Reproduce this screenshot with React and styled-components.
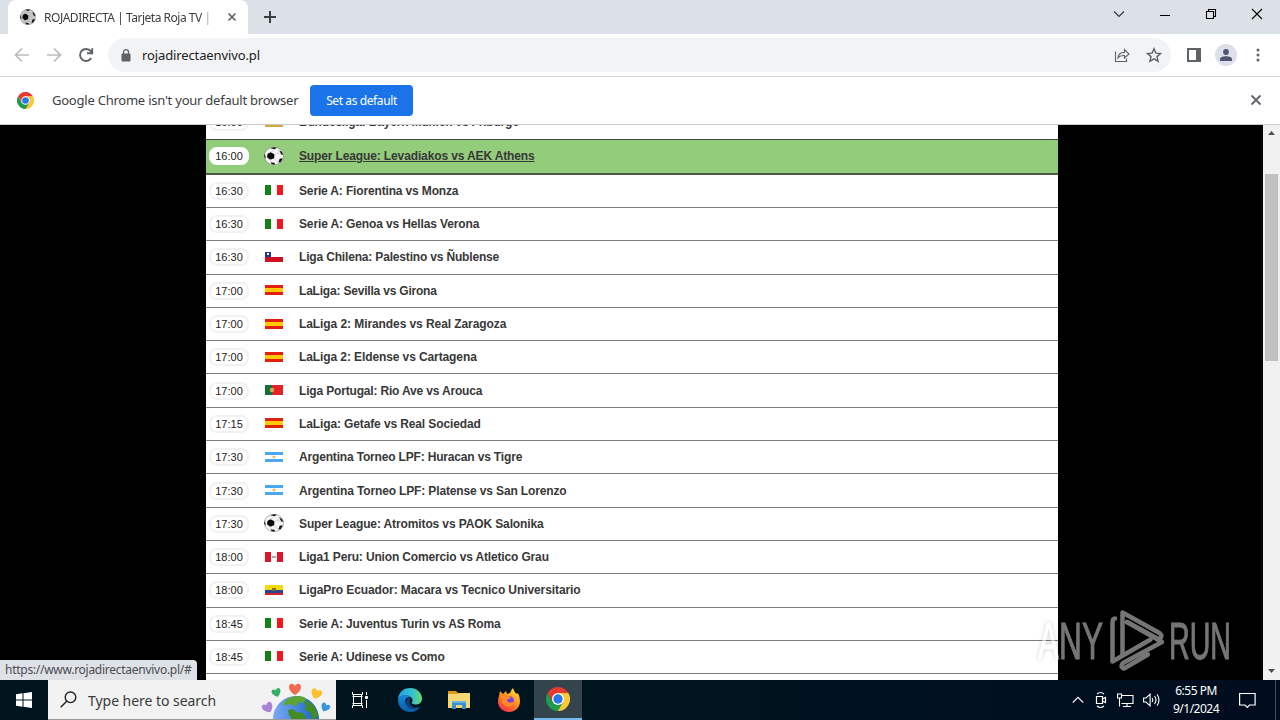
import React from 'react'
import styled, { createGlobalStyle, css } from 'styled-components'

const GlobalStyle = createGlobalStyle`
  * { box-sizing: border-box; }
  body { margin: 0; background: #000; overflow: hidden; }
  svg { display: block; flex: none; }
`

const uiFont = '"Noto Sans", "Open Sans", sans-serif'

// track = letter spacing of the title in px
const matches = [
  { time: '16:00', flag: 'de', track: -0.19, title: 'Bundesliga: Bayern Munich vs Friburgo' },
  { time: '16:00', flag: 'ball', track: -0.13, title: 'Super League: Levadiakos vs AEK Athens', active: true },
  { time: '16:30', flag: 'it', track: -0.15, title: 'Serie A: Fiorentina vs Monza' },
  { time: '16:30', flag: 'it', track: -0.13, title: 'Serie A: Genoa vs Hellas Verona' },
  { time: '16:30', flag: 'cl', track: -0.17, title: 'Liga Chilena: Palestino vs Ñublense' },
  { time: '17:00', flag: 'es', track: -0.2, title: 'LaLiga: Sevilla vs Girona' },
  { time: '17:00', flag: 'es', track: -0.08, title: 'LaLiga 2: Mirandes vs Real Zaragoza' },
  { time: '17:00', flag: 'es', track: -0.1, title: 'LaLiga 2: Eldense vs Cartagena' },
  { time: '17:00', flag: 'pt', track: -0.17, title: 'Liga Portugal: Rio Ave vs Arouca' },
  { time: '17:15', flag: 'es', track: -0.12, title: 'LaLiga: Getafe vs Real Sociedad' },
  { time: '17:30', flag: 'ar', track: -0.17, title: 'Argentina Torneo LPF: Huracan vs Tigre' },
  { time: '17:30', flag: 'ar', track: -0.14, title: 'Argentina Torneo LPF: Platense vs San Lorenzo' },
  { time: '17:30', flag: 'ball', track: -0.12, title: 'Super League: Atromitos vs PAOK Salonika' },
  { time: '18:00', flag: 'pe', track: -0.15, title: 'Liga1 Peru: Union Comercio vs Atletico Grau' },
  { time: '18:00', flag: 'ec', track: -0.09, title: 'LigaPro Ecuador: Macara vs Tecnico Universitario' },
  { time: '18:45', flag: 'it', track: -0.14, title: 'Serie A: Juventus Turin vs AS Roma' },
  { time: '18:45', flag: 'it', track: -0.14, title: 'Serie A: Udinese vs Como' },
]

const Ball = ({ w = 20, h = 18, skin = '#f4f4f4' }) => (
  <svg width={w} height={h} viewBox="0 0 20 18" preserveAspectRatio="none">
    <ellipse cx="10" cy="9" rx="9.6" ry="8.8" fill={skin} stroke="#777" strokeWidth=".5" />
    <path d="M3.6 6.8 6.6 5.2 10.4 7.2 10.2 11.2 6.2 12.8 3 10.2Z" fill="#080808" />
    <path d="M6.5 1.2 10 .2 12.8.8 10.5 2.2Z M15.2 3.2 18 5 19.2 8 17.3 7.6Z M15.8 11.5 18.8 11.6 16.6 15.2 14.3 15.6Z M6.8 15.2 11 16 10.3 17.8 7.5 17Z M.5 6.5 1.6 9.6 1.3 12.2.3 9.5Z" fill="#111" />
    <path d="M7 5.3 10.5 2.2M10.4 7.6 14 6.5 17.3 7.6M9.8 11.2 14.3 15.6M6 12.2 6.8 15.2M14 6.5 15.2 3.2" stroke="#bbb" strokeWidth=".5" fill="none" />
  </svg>
)

const Flag = ({ code }) => {
  if (code === 'ball') return <Ball />
  return (
    <svg width="18" height="10" viewBox="0 0 18 10" shapeRendering="crispEdges">
      {code === 'de' && <><path d="M0 0h18v4H0z" fill="#111" /><path d="M0 4h18v3H0z" fill="#d00" /><path d="M0 7h18v3H0z" fill="#cfa93a" /></>}
      {code === 'it' && <><path d="M0 0h6v10H0z" fill="#128216" /><path d="M6 0h6v10H6z" fill="#fff" /><path d="M12 0h6v10h-6z" fill="#f6161c" /></>}
      {code === 'cl' && <><path d="M0 0h18v5H0z" fill="#fff" /><path d="M0 5h18v5H0z" fill="#cf1020" /><path d="M0 0h6v5H0z" fill="#1c3795" /><path d="M2 1h2v2H2z" fill="#fff" /></>}
      {code === 'es' && <><path d="M0 0h18v10H0z" fill="#e3200d" /><path d="M0 3h18v4H0z" fill="#ffc905" /></>}
      {code === 'pt' && <><path d="M0 0h18v10H0z" fill="#e42328" /><path d="M0 0h7v10H0z" fill="#14703a" /><circle cx="7" cy="5" r="2.2" fill="#d9b33c" shapeRendering="auto" /><path d="M6 4h2v2H6z" fill="#e0907a" /></>}
      {code === 'ar' && <><path d="M0 0h18v10H0z" fill="#4aa8ee" /><path d="M0 3h18v4H0z" fill="#fff" /><circle cx="9" cy="5" r="1.6" fill="#eeba6a" shapeRendering="auto" /></>}
      {code === 'pe' && <><path d="M0 0h18v10H0z" fill="#e0122c" /><path d="M6 0h6v10H6z" fill="#fff" /><path d="M7 4h4v2H7z" fill="#a8b294" /></>}
      {code === 'ec' && <><path d="M0 0h18v5H0z" fill="#f4d90c" /><path d="M0 5h18v3H0z" fill="#28448e" /><path d="M0 8h18v2H0z" fill="#d3202b" /><path d="M7 3h4v3H7z" fill="#7f6a3b" /></>}
    </svg>
  )
}

const ChromeLogo = ({ size }) => (
  <svg width={size} height={size} viewBox="0 0 48 48">
    <path d="M24 24V12H44.8A24 24 0 0 1 24 48Z" fill="#fcc934" />
    <path d="M24 24 34.4 30 24 48A24 24 0 0 1 3.2 12L13.6 30Z" fill="#229a4c" />
    <path d="M24 12H44.8A24 24 0 0 0 3.2 12L13.6 30Z" fill="#e33b2e" />
    <circle cx="24" cy="24" r="12" fill="#fff" />
    <circle cx="24" cy="24" r="9.4" fill="#2878eb" />
  </svg>
)

const Stroke = ({ size = 16, d, w = 1.5, color = '#5f6368', fill = 'none' }) => (
  <svg width={size} height={size} viewBox="0 0 16 16">
    <path d={d} fill={fill} stroke={color} strokeWidth={w} />
  </svg>
)

export default function App() {
  return (
    <Screen>
      <GlobalStyle />
      <TabStrip>
        <Tab>
          <Ball w={16} h={16} skin="#c4c4c4" />
          <TabTitle>ROJADIRECTA | Tarjeta Roja TV | P</TabTitle>
          <Stroke size={16} d="M4.5 4.5l7 7M11.5 4.5l-7 7" w={1.7} />
        </Tab>
        <NewTab><Stroke d="M8 2v12M2 8h12" w={2} color="#3c4043" /></NewTab>
        <WindowButtons>
          <Stroke d="M3 5.5l5 5 5-5" w={1.1} color="#333" />
          <Stroke d="M3 9.5h10" w={1} color="#000" />
          <Stroke d="M3.5 5.5h7v7h-7zM5.5 5.5v-2h7v7h-2" w={1.1} color="#000" />
          <Stroke d="M3 3l10 10M13 3L3 13" w={1.1} color="#000" />
        </WindowButtons>
      </TabStrip>

      <Toolbar>
        <NavButtons>
          <Stroke d="M15 8H2M8 1.5L1.5 8 8 14.5" w={1.7} color="#b9bbbe" />
          <Stroke d="M1 8h13M8 1.5L14.5 8 8 14.5" w={1.7} color="#b9bbbe" />
          <Stroke d="M13.2 11A6 6 0 1 1 12.7 4.2L14 5.6M14.2 1.2V6.3H9" w={1.9} />
        </NavButtons>
        <Omnibox>
          <svg width="10" height="13" viewBox="0 0 10 13">
            <path d="M1 5h8v7H1z" fill="#5f6368" stroke="#5f6368" />
            <path d="M2.5 5V3.2a2.5 2.5 0 0 1 5 0V5" fill="none" stroke="#5f6368" strokeWidth="1.3" />
          </svg>
          <Address>rojadirectaenvivo.pl</Address>
          <Stroke d="M1.5 4.5v10h11v-3M4 11c.3-4 3-5.6 6.5-5.6V2.5L15 7l-4.500 4V8.5C7.5 8.3 5.5 9 4 11z" w={1.1} />
          <Stroke d="M8 1.8l1.85 4.3 4.7.4-3.56 3.1 1.06 4.6L8 11.8l-4.05 2.4L5 9.6 1.45 6.5l4.7-.4z" w={1.4} />
        </Omnibox>
        <ToolbarEnd>
          <svg width="14" height="14" viewBox="0 0 14 14">
            <path d="M1 1h12v12H1z" fill="#fff" stroke="#5f6368" strokeWidth="2" />
            <path d="M9 1h4v12H9z" fill="#5f6368" />
          </svg>
          <Avatar>
            <svg width="12" height="12" viewBox="0 0 12 12" fill="#4d5572">
              <circle cx="6" cy="3" r="2.9" /><path d="M0 12V10.2C0 8 3.5 7.2 6 7.2s6 .8 6 3V12z" />
            </svg>
          </Avatar>
          <svg width="4" height="14" viewBox="0 0 4 14" fill="#5f6368">
            <circle cx="2" cy="2" r="1.5" /><circle cx="2" cy="7" r="1.5" /><circle cx="2" cy="12" r="1.5" />
          </svg>
        </ToolbarEnd>
      </Toolbar>

      <InfoBar>
        <ChromeLogo size={17} />
        <InfoText>Google Chrome isn't your default browser</InfoText>
        <DefaultButton>Set as default</DefaultButton>
        <CloseInfo><Stroke d="M3.5 3.5l9 9M12.5 3.5l-9 9" w={1.8} /></CloseInfo>
      </InfoBar>

      <Viewport>
        <Agenda>
          {matches.map((m, i) => (
            <Match key={i} $active={m.active}>
              <Time $active={m.active}>{m.time}</Time>
              <FlagCell><Flag code={m.flag} /></FlagCell>
              <MatchTitle $active={m.active} $track={m.track}>{m.title}</MatchTitle>
            </Match>
          ))}
        </Agenda>
        <Scrollbar>
          <Arrow />
          <Thumb />
          <Arrow $down />
        </Scrollbar>
        <StatusBubble>https://www.rojadirectaenvivo.pl/#</StatusBubble>
        <Watermark>
          <svg width="200" height="70" viewBox="0 0 200 70">
            <g fill="#fff" stroke="#fff" strokeWidth="1" fontFamily="Liberation Sans, sans-serif" fontSize="51">
              <text x="3" y="53" textLength="65" lengthAdjust="spacingAndGlyphs">ANY</text>
              <text x="134" y="53" textLength="62" lengthAdjust="spacingAndGlyphs">RUN</text>
            </g>
            <g fill="none" stroke="#fff" strokeWidth="4.5" strokeLinejoin="round" strokeLinecap="round">
              <path d="M87.500 48V6.500l37 20.500q4 3-.5 6.500L92 16" />
              <path d="M80 12.500q-2.500 0-2.500 4.500v38.500l38-22" />
              <path d="M92 16l35 20L88 57q-3.500 4 1 5.500l24-14" />
            </g>
          </svg>
        </Watermark>
      </Viewport>

      <Taskbar>
        <StartButton>
          <svg width="16" height="16" viewBox="0 0 16 16" fill="#fff">
            <path d="M0 2.2L6.5 1.3V7.5H0zM7.5 1.2L16 0V7.5H7.5zM0 8.5H6.5V14.7L0 13.8zM7.5 8.5H16V16L7.5 14.8z" />
          </svg>
        </StartButton>
        <SearchBox>
          <svg width="17" height="17" viewBox="0 0 17 17" fill="none" stroke="#222" strokeWidth="1.4">
            <circle cx="10.5" cy="6.3" r="5.3" /><path d="M6.7 10.2L.7 16.2" />
          </svg>
          <span>Type here to search</span>
          <Globe />
        </SearchBox>
        <TaskIcon>
          <svg width="18" height="18" viewBox="0 0 18 18" fill="none" stroke="#fff" strokeWidth="1">
            <path d="M1.500 1v2.500h10V1M1.500 17v-2.500h10V17M2.500 3.500v11M10.500 3.500v11M1.500 5.500h10M1.500 12.500h10M15.500 1v3M15.500 9v8" /><path d="M14.500 5.500h2v2h-2z" fill="#fff" />
          </svg>
        </TaskIcon>
        <TaskIcon><Edge /></TaskIcon>
        <TaskIcon>
          <svg width="22" height="20" viewBox="0 0 22 20">
            <path d="M0 1h8l2 2h12v4H0z" fill="#e29a1d" /><path d="M0 4h9l2-1h11v15H0z" fill="#f9d774" />
            <path d="M4 11h14v8h-4v-4H8v4H4z" fill="#3b91cf" /><path d="M4 11h14v2H4z" fill="#62b5e5" />
          </svg>
        </TaskIcon>
        <TaskIcon><Firefox /></TaskIcon>
        <TaskIcon $active><ChromeLogo size={24} /></TaskIcon>
        <Tray>
          <Stroke size={14} d="M2 11l6-6 6 6" w={1.4} color="#fff" />
          <svg width="14" height="18" viewBox="0 0 14 18" fill="none" stroke="#fff" strokeWidth="1.2">
            <path d="M2.500 5.500h6v7h-6zM8.500 8l3-1.500v5l-3-1.500M3 3Q6.500 0 10 3M3 15Q6.500 18 10 15" />
          </svg>
          <svg width="17" height="15" viewBox="0 0 17 15" fill="none" stroke="#fff" strokeWidth="1.1">
            <path d="M5 2.500h11v8H4.500M10 10.500v3M6 13.500h8M.5 1h4v4h-4zM2.500 5v8.500" />
          </svg>
          <svg width="17" height="14" viewBox="0 0 17 14" fill="none" stroke="#fff" strokeWidth="1.1">
            <path d="M.6 5h2.500l4-3.800v11.600L3 9H.6zM9 5q1.500 2 0 4M11.500 3q3 4 0 8M14 1.200q4 5.800 0 11.600" />
          </svg>
        </Tray>
        <Clock><span>6:55 PM</span><span>9/1/2024</span></Clock>
        <svg width="17" height="17" viewBox="0 0 17 17" fill="none" stroke="#fff" strokeWidth="1.2">
          <path d="M.6 1.500h15.500v11.500H10.500L8.300 15.300 6 13H.6z" />
        </svg>
        <ShowDesktop />
      </Taskbar>
    </Screen>
  )
}

const heart = 'M0 8C-3 6-6 3.500-6 0-6-4-1.500-4 0-1 1.500-4 6-4 6 0 6 3.500 3 6 0 8Z'

const GlobeWrap = styled.div`
  margin-left: auto;
  align-self: flex-end;
`

const Globe = () => (
  <GlobeWrap>
    <svg width="72" height="39" viewBox="0 0 72 39">
      <defs>
        <linearGradient id="sea" x1="0" x2="1"><stop offset="0" stopColor="#7ba9f5" /><stop offset="1" stopColor="#1764c4" /></linearGradient>
      </defs>
      <circle cx="37" cy="39" r="23" fill="url(#sea)" />
      <path d="M25 22q6-6 14-6 6 0 8 3l-3 4-4-1-3 4-7-2-5 2z" fill="#5da531" />
      <path d="M47 20q9 4 12 15l-2 4h-3l-3-7-5-2 1-5-2-2zM29 30l5-1 3 3 7 1 4 6H33l-3-4z" fill="#438c24" />
      <path d={heart} transform="translate(36 7)" fill="#f36b53" />
      <path d={heart} transform="translate(17 11) rotate(-18) scale(.75)" fill="#35ae6a" />
      <path d={heart} transform="translate(58 12) rotate(20) scale(.9)" fill="#fbc02d" />
      <path d={heart} transform="translate(8 26) rotate(-28) scale(.9)" fill="#a982d6" />
      <path d={heart} transform="translate(67 26) rotate(28) scale(.75)" fill="#3796e0" />
    </svg>
  </GlobeWrap>
)

const Edge = () => (
  <svg width="24" height="24" viewBox="0 0 24 24">
    <defs>
      <linearGradient id="edgeTop" x1="0" x2="1"><stop offset="0" stopColor="#1ea5e3" /><stop offset=".6" stopColor="#35c1cf" /><stop offset="1" stopColor="#66dc6b" /></linearGradient>
      <linearGradient id="edgeLow" x1="0" x2="0" y2="1"><stop offset="0" stopColor="#1687d9" /><stop offset="1" stopColor="#0b5cab" /></linearGradient>
    </defs>
    <path d="M0 11C1 3 7 0 12 0c7 0 12 5 12 10.500 0 4-3 6-6.500 6-3 0-4-1.300-3.500-2.300.8-1.200.8-2.600 0-3.700C11 6 3 6 0 11z" fill="url(#edgeTop)" />
    <path d="M0 11C2 6 10 6 13 9c-4-.7-6 2-5.600 5 .6 5 7 8.500 14.600 5C19 23 15.500 24 12 24 5 24 0 19 0 11z" fill="url(#edgeLow)" />
    <path d="M11 9.500c-5 3-3 11 3.500 11.500 3 .2 6-1 7.500-2-5 1.800-10-.5-10.500-5-.2-1.700.4-2.800 1.300-4z" fill="#103f79" />
  </svg>
)

const Firefox = () => (
  <svg width="24" height="24" viewBox="0 0 24 24">
    <defs>
      <linearGradient id="fox" x1=".8" y1="0" x2=".2" y2="1"><stop offset="0" stopColor="#ffe43b" /><stop offset=".5" stopColor="#ff8a1f" /><stop offset="1" stopColor="#f5264f" /></linearGradient>
    </defs>
    <path d="M2 8l1-5 3 3 3-3 1 3 3-1q1-3 3-5 1 4 4 6l1-1q2 4 2 8c0 7-5 11-11 11S1 20 1 13q0-3 1-5z" fill="url(#fox)" />
    <circle cx="12" cy="13" r="5" fill="#7542e5" />
    <path d="M5 7q3-2 6 1l3 1q-1 2-4 2.500 0 3 3 3 3 .5 5-2-1 6-7 6-6-1-6-6z" fill="#ff8b25" />
  </svg>
)

const Screen = styled.div`
  width: 1280px;
  height: 720px;
  display: flex;
  flex-direction: column;
  overflow: hidden;
  font-family: ${uiFont};
`

const TabStrip = styled.header`
  height: 34px;
  flex: none;
  display: flex;
  align-items: center;
  background: #dce0e7;
  padding-left: 8px;
`

const Tab = styled.div`
  width: 240px;
  height: 34px;
  display: flex;
  align-items: center;
  gap: 8px;
  padding: 0 8px 0 12px;
  background: #fff;
  border-radius: 8px 8px 0 0;
`

const TabTitle = styled.span`
  width: 170px;
  margin-right: 2px;
  font-size: 12px;
  letter-spacing: -0.48px;
  color: #3c4043;
  white-space: nowrap;
  mask-image: linear-gradient(90deg, #000 92%, transparent);
`

const NewTab = styled.div`
  margin-left: 14px;
`

const WindowButtons = styled.div`
  margin-left: auto;
  margin-bottom: 6px;
  display: flex;
  gap: 30px;
  padding-right: 15px;
`

const Toolbar = styled.div`
  height: 43px;
  flex: none;
  display: flex;
  align-items: center;
  background: #fff;
  border-bottom: 1px solid #d5d7da;
`

const NavButtons = styled.div`
  width: 108px;
  padding-left: 14px;
  display: flex;
  gap: 16px;
`

const Omnibox = styled.div`
  width: 1063px;
  height: 34px;
  display: flex;
  align-items: center;
  gap: 16px;
  padding: 0 9px 0 13px;
  border-radius: 17px;
  background: #f1f3f4;
`

const Address = styled.span`
  flex: 1;
  margin-left: -5px;
  font-size: 13px;
  letter-spacing: -0.12px;
  color: #202124;
`

const ToolbarEnd = styled.div`
  display: flex;
  align-items: center;
  padding-left: 16px;
  gap: 14px;
`

const Avatar = styled.div`
  width: 22px;
  height: 22px;
  margin-right: 5px;
  display: flex;
  align-items: center;
  justify-content: center;
  border-radius: 50%;
  background: #dde0eb;
`

const InfoBar = styled.div`
  height: 48px;
  flex: none;
  display: flex;
  align-items: center;
  padding: 0 16px 1px 17px;
  background: #fff;
  border-bottom: 1px solid #c9cbce;
`

const InfoText = styled.span`
  margin-left: 18px;
  width: 246px;
  font-size: 13px;
  letter-spacing: -0.23px;
  color: #3c4043;
  white-space: nowrap;
`

const DefaultButton = styled.button`
  width: 103px;
  height: 31px;
  margin: 1px 0 0 12px;
  padding: 0;
  border: 0;
  border-radius: 4px;
  background: #1a73e8;
  color: #fff;
  font: 12px ${uiFont};
  letter-spacing: -0.4px;
`

const CloseInfo = styled.div`
  margin-left: auto;
`

const Viewport = styled.main`
  position: relative;
  flex: 1;
  min-height: 0;
  display: flex;
  justify-content: space-between;
  padding-left: 206px;
  background: #000;
  overflow: hidden;
`

const Agenda = styled.div`
  width: 852px;
  margin-top: -19.3px;
  background: #fff;
`

const Match = styled.div`
  height: 33.3px;
  display: flex;
  align-items: center;
  padding-left: 3px;
  background: #fff;
  border-bottom: 1px solid #7b7c7f;
  &:first-child {
    padding-top: 1px;
    border-bottom-color: #fff;
  }
  ${p => p.$active && css`
    height: 35.7px;
    background: #93cc7b;
    border-top: 1px solid #3f4a3f;
    border-bottom: 2px solid #4c584c;
  `}
`

const Time = styled.div`
  width: 40px;
  height: 18px;
  line-height: 15px;
  text-align: center;
  border: 2px solid ${p => (p.$active ? '#fff' : '#f2f2f3')};
  border-radius: 8px;
  background: #fff;
  color: #222;
  font-family: "Liberation Sans", Arial, sans-serif;
  font-size: 11px;
`

const FlagCell = styled.div`
  width: 50px;
  padding-bottom: 1px;
  display: flex;
  justify-content: center;
`

const MatchTitle = styled.a`
  color: #383838;
  font-family: "Liberation Sans", Arial, sans-serif;
  font-size: 12px;
  font-weight: bold;
  letter-spacing: ${p => p.$track}px;
  white-space: nowrap;
  text-decoration: ${p => (p.$active ? 'underline' : 'none')};
`

const Scrollbar = styled.div`
  width: 17px;
  display: flex;
  flex-direction: column;
  align-items: center;
  background: #f1f1f1;
`

const Arrow = styled.div`
  width: 7px;
  height: 4px;
  margin: ${p => (p.$down ? 'auto 0 7px' : '6px 0 39px')};
  background: #505050;
  clip-path: ${p => (p.$down ? 'polygon(0 0, 100% 0, 50% 100%)' : 'polygon(50% 0, 100% 100%, 0 100%)')};
`

const Thumb = styled.div`
  width: 13px;
  height: 187px;
  background: #c1c1c1;
`

const StatusBubble = styled.div`
  position: absolute;
  left: 0;
  bottom: 0;
  width: 197px;
  height: 20px;
  line-height: 20px;
  padding-left: 5px;
  border-radius: 0 4px 0 0;
  background: #dee1e6;
  color: #4a4d51;
  font-size: 12px;
  letter-spacing: -0.27px;
  white-space: nowrap;
`

const Watermark = styled.div`
  position: absolute;
  left: 1035px;
  top: 481px;
  opacity: .46;
  filter: drop-shadow(0 0 2px rgba(0, 0, 0, .4));
`

const Taskbar = styled.footer`
  height: 40px;
  flex: none;
  display: flex;
  align-items: center;
  background: linear-gradient(90deg, #00141d, #00141f 50%, #000d1f);
  color: #fff;
`

const StartButton = styled.div`
  width: 48px;
  display: flex;
  justify-content: center;
`

const SearchBox = styled.div`
  width: 288px;
  height: 40px;
  display: flex;
  align-items: center;
  padding: 0 5px 0 12px;
  background: #f2f2f2;
  border-bottom: 1px solid #9a9a9a;
  color: #3a3a3a;
  font-size: 14px;
  span { margin: 2px 0 0 11px; letter-spacing: -0.04px; white-space: nowrap; }
`

const TaskIcon = styled.div`
  width: 48px;
  height: 40px;
  margin-right: 1.5px;
  display: flex;
  align-items: center;
  justify-content: center;
  ${p => p.$active && css`
    background: #33444d;
    border-bottom: 2px solid #76b9ed;
  `}
`

const Tray = styled.div`
  margin-left: auto;
  display: flex;
  align-items: center;
  gap: 9px;
`

const Clock = styled.div`
  width: 72px;
  margin-right: 7px;
  display: flex;
  flex-direction: column;
  align-items: center;
  font-size: 12px;
  line-height: 18px;
  letter-spacing: -0.5px;
`

const ShowDesktop = styled.div`
  width: 5px;
  height: 40px;
  margin-left: 19px;
  border-left: 1px solid #45505c;
`
